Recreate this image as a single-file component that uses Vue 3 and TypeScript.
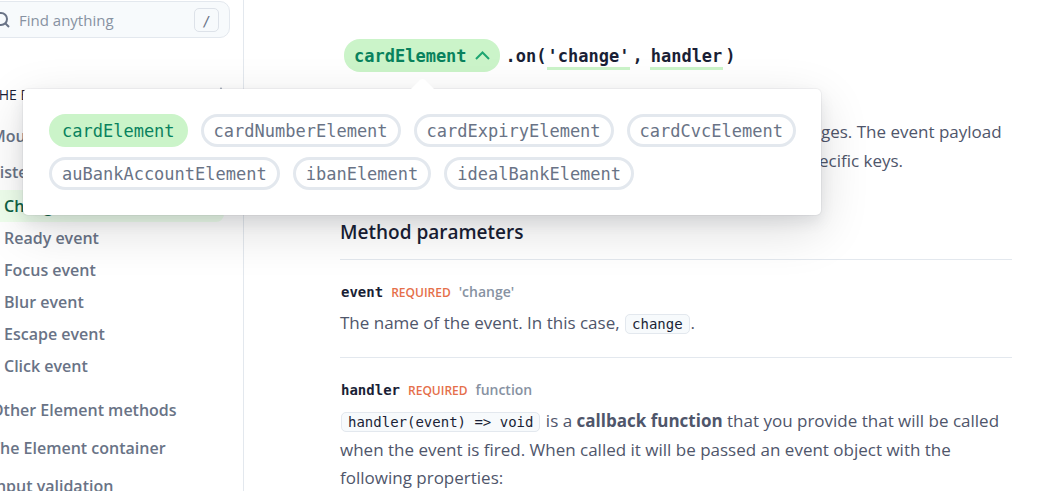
<script setup lang="ts">
import { ref } from 'vue'

const elements: string[] = [
  'cardElement',
  'cardNumberElement',
  'cardExpiryElement',
  'cardCvcElement',
  'auBankAccountElement',
  'ibanElement',
  'idealBankElement',
]
const selected = ref('cardElement')
const open = ref(true)
const query = ref('')

const events: string[] = [
  'Change event',
  'Ready event',
  'Focus event',
  'Blur event',
  'Escape event',
  'Click event',
]
const activeEvent = ref('Change event')
</script>

<template>
  <div class="page">
    <aside class="sidebar">
      <div class="sidebar-inner">
        <label class="search">
          <svg class="search-icon" width="18" height="18" viewBox="0 0 18 18" aria-hidden="true">
            <circle cx="8" cy="8" r="6" />
            <path d="M12.5 12.5 16 16" />
          </svg>
          <input v-model="query" type="text" placeholder="Find anything" aria-label="Find anything" />
          <kbd>/</kbd>
        </label>
        <nav>
          <button class="section" type="button">
            <span>The Element</span>
            <svg width="6" height="16" viewBox="0 0 6 16" aria-hidden="true">
              <path d="M3 0 6 5H0Z" /><path d="M3 16 0 11H6Z" />
            </svg>
          </button>
          <a class="topic" href="#mount">Mount the Element</a>
          <a class="topic topic-last" href="#listen">Listen to events</a>
          <ul>
            <li v-for="name in events" :key="name">
              <a
                href="#event"
                :class="['event-link', { active: name === activeEvent }]"
                @click.prevent="activeEvent = name"
              >{{ name }}</a>
            </li>
          </ul>
          <a class="topic" href="#methods">Other Element methods</a>
          <a class="topic" href="#container">The Element container</a>
          <a class="topic" href="#validation">Input validation</a>
        </nav>
      </div>
    </aside>

    <main>
      <div class="signature">
        <button class="picker" type="button" :aria-expanded="open" @click="open = !open">
          <span>{{ selected }}</span>
          <svg width="15" height="10" viewBox="0 0 15 10" aria-hidden="true"><path d="M1 8 7.5 1.5 14 8" /></svg>
        </button>
        <code class="call">.on(<a href="#event-param">'change'</a><span class="comma">,</span><a href="#handler-param">handler</a><span class="paren">)</span></code>
        <div v-if="open" class="popover">
          <button
            v-for="name in elements"
            :key="name"
            type="button"
            :class="['chip', { chosen: name === selected }]"
            @click="selected = name"
          >{{ name }}</button>
        </div>
      </div>

      <p class="intro">
        The <code>change</code> event is emitted when the Element's value changes. The event payload
        always contains certain keys, in addition to some Element-specific keys.
      </p>

      <h2>Method parameters</h2>

      <section id="event-param" class="param">
        <h3><code>event</code><span class="required">REQUIRED</span><span class="type">'change'</span></h3>
        <p>The name of the event. In this case, <code>change</code>.</p>
      </section>
      <section id="handler-param" class="param">
        <h3><code>handler</code><span class="required">REQUIRED</span><span class="type">function</span></h3>
        <p>
          <code>handler(event) =&gt; void</code> is a <strong>callback function</strong> that you provide that will be
          called when the event is fired. When called it will be passed an event object with the following properties:
        </p>
      </section>
    </main>
  </div>
</template>

<style>
body {
  margin: 0;
  background: #fff;
}
</style>

<style scoped>
.page {
  display: grid;
  grid-template-columns: 244px minmax(0, 1fr);
  height: 100vh;
  overflow: hidden;
  font-family: "Open Sans", "Noto Sans", sans-serif;
  font-size: 17px;
  color: #4f566b;
}
button {
  font: inherit;
  border: 0;
  background: none;
  cursor: pointer;
}
a {
  color: inherit;
  text-decoration: none;
}
code {
  font-family: "DejaVu Sans Mono", monospace;
}

.sidebar {
  box-sizing: border-box;
  border-right: 1px solid #e3e8ee;
  overflow: hidden;
}
.sidebar-inner {
  margin-left: -24px;
}
.search {
  box-sizing: border-box;
  display: flex;
  align-items: center;
  height: 37px;
  margin: 1px 13px 0 0;
  padding: 0 10px 0 16px;
  border: 1px solid #e3e8ee;
  border-radius: 10px;
  background: #f7fafc;
}
.search-icon {
  flex: none;
  fill: none;
  stroke: #697386;
  stroke-width: 2;
}
.search input {
  flex: 1;
  min-width: 0;
  padding: 0;
  margin-left: 8px;
  border: 0;
  outline: 0;
  background: none;
  font: inherit;
  font-size: 15px;
  color: #3c4257;
}
.search input::placeholder {
  color: #8792a2;
  opacity: 1;
}
kbd {
  box-sizing: border-box;
  width: 25px;
  height: 24px;
  border: 1px solid #dde2e9;
  border-radius: 5px;
  font-family: "DejaVu Sans Mono", monospace;
  font-size: 14px;
  line-height: 24px;
  text-align: center;
  color: #697386;
}
nav {
  padding: 47px 19px 0 15px;
}
.section {
  display: flex;
  width: 100%;
  align-items: center;
  justify-content: space-between;
  padding: 0;
  line-height: 20px;
  font-size: 14px;
  font-weight: 500;
  text-transform: uppercase;
  color: #1a1f36;
}
.section svg {
  fill: #a3acb9;
}
.topic {
  display: block;
  line-height: 38px;
  font-size: 16px;
  font-weight: 600;
  color: #697386;
}
.section + .topic {
  margin-top: 12px;
}
.topic-last {
  line-height: 35px;
}
ul {
  list-style: none;
  margin: 0 0 9px -15px;
  padding: 0;
}
.event-link {
  display: block;
  padding-left: 28px;
  line-height: 32px;
  font-size: 16px;
  font-weight: 600;
  color: #697386;
}
.event-link.active {
  border-radius: 0 8px 8px 0;
  background: #efffed;
  color: #0e6245;
}

main {
  padding: 39px 33px 0 96px;
}
.signature {
  position: relative;
  display: flex;
  align-items: center;
  margin-left: 4px;
  font-size: 17px;
  font-weight: 700;
}
.picker {
  display: flex;
  align-items: center;
  gap: 8px;
  height: 33px;
  padding: 0 10px;
  border-radius: 16px;
  background: #cbf4c9;
  color: #09825d;
  font-family: "DejaVu Sans Mono", monospace;
}
.picker svg {
  fill: none;
  stroke: #1ea672;
  stroke-width: 2;
}
.call {
  display: flex;
  margin: 4px 0 0 6px;
  line-height: 21px;
  color: #1a1f36;
}
.call a {
  padding: 0 1px;
  border-bottom: 3px solid #cbf4c9;
}
.comma {
  margin: 0 7px 0 2px;
}
.paren {
  margin-left: 2px;
}
.popover {
  position: absolute;
  z-index: 1;
  top: 50px;
  left: -321px;
  box-sizing: border-box;
  width: 798px;
  display: flex;
  flex-wrap: wrap;
  gap: 10px 13px;
  padding: 25px 20px 25px 26px;
  border-radius: 5px;
  background: #fff;
  box-shadow: 0 0 0 1px rgba(60, 66, 87, 0.05), 0 7px 14px rgba(60, 66, 87, 0.1), 0 15px 50px rgba(0, 0, 0, 0.14);
}
.popover::before {
  content: "";
  position: absolute;
  top: -8px;
  left: 391px;
  width: 17px;
  height: 17px;
  border-radius: 4px 0 0 0;
  background: #fff;
  transform: rotate(45deg);
}
.chip {
  height: 33px;
  padding: 0 10px;
  border: 3px solid #e3e8ee;
  border-radius: 17px;
  color: #697386;
  font-family: "DejaVu Sans Mono", monospace;
  font-weight: 400;
}
.chip.chosen {
  border-color: #cbf4c9;
  background: #cbf4c9;
  color: #09825d;
}

p {
  margin: 0;
  line-height: 28px;
}
p code {
  margin: 0 1px;
  padding: 1px 6px;
  border: 1px solid #e3e8ee;
  border-radius: 5px;
  background: #f7fafc;
  font-size: 14px;
  color: #1a1f36;
}
.intro {
  margin-top: 46px;
}
h2 {
  margin: 43px 0 0;
  padding-bottom: 13px;
  border-bottom: 1px solid #e3e8ee;
  line-height: 28px;
  font-size: 19px;
  font-weight: 600;
  color: #1a1f36;
}
.param {
  padding: 22px 0 19px;
  border-bottom: 1px solid #e3e8ee;
}
h3 {
  display: flex;
  align-items: baseline;
  gap: 8px;
  margin: 0 0 6px 1px;
  line-height: 20px;
  font-size: 14px;
  font-weight: 600;
}
h3 code {
  font-weight: 700;
  color: #1a1f36;
}
.required {
  font-size: 12px;
  color: #e56f4a;
}
.type {
  color: #8792a2;
}
</style>
